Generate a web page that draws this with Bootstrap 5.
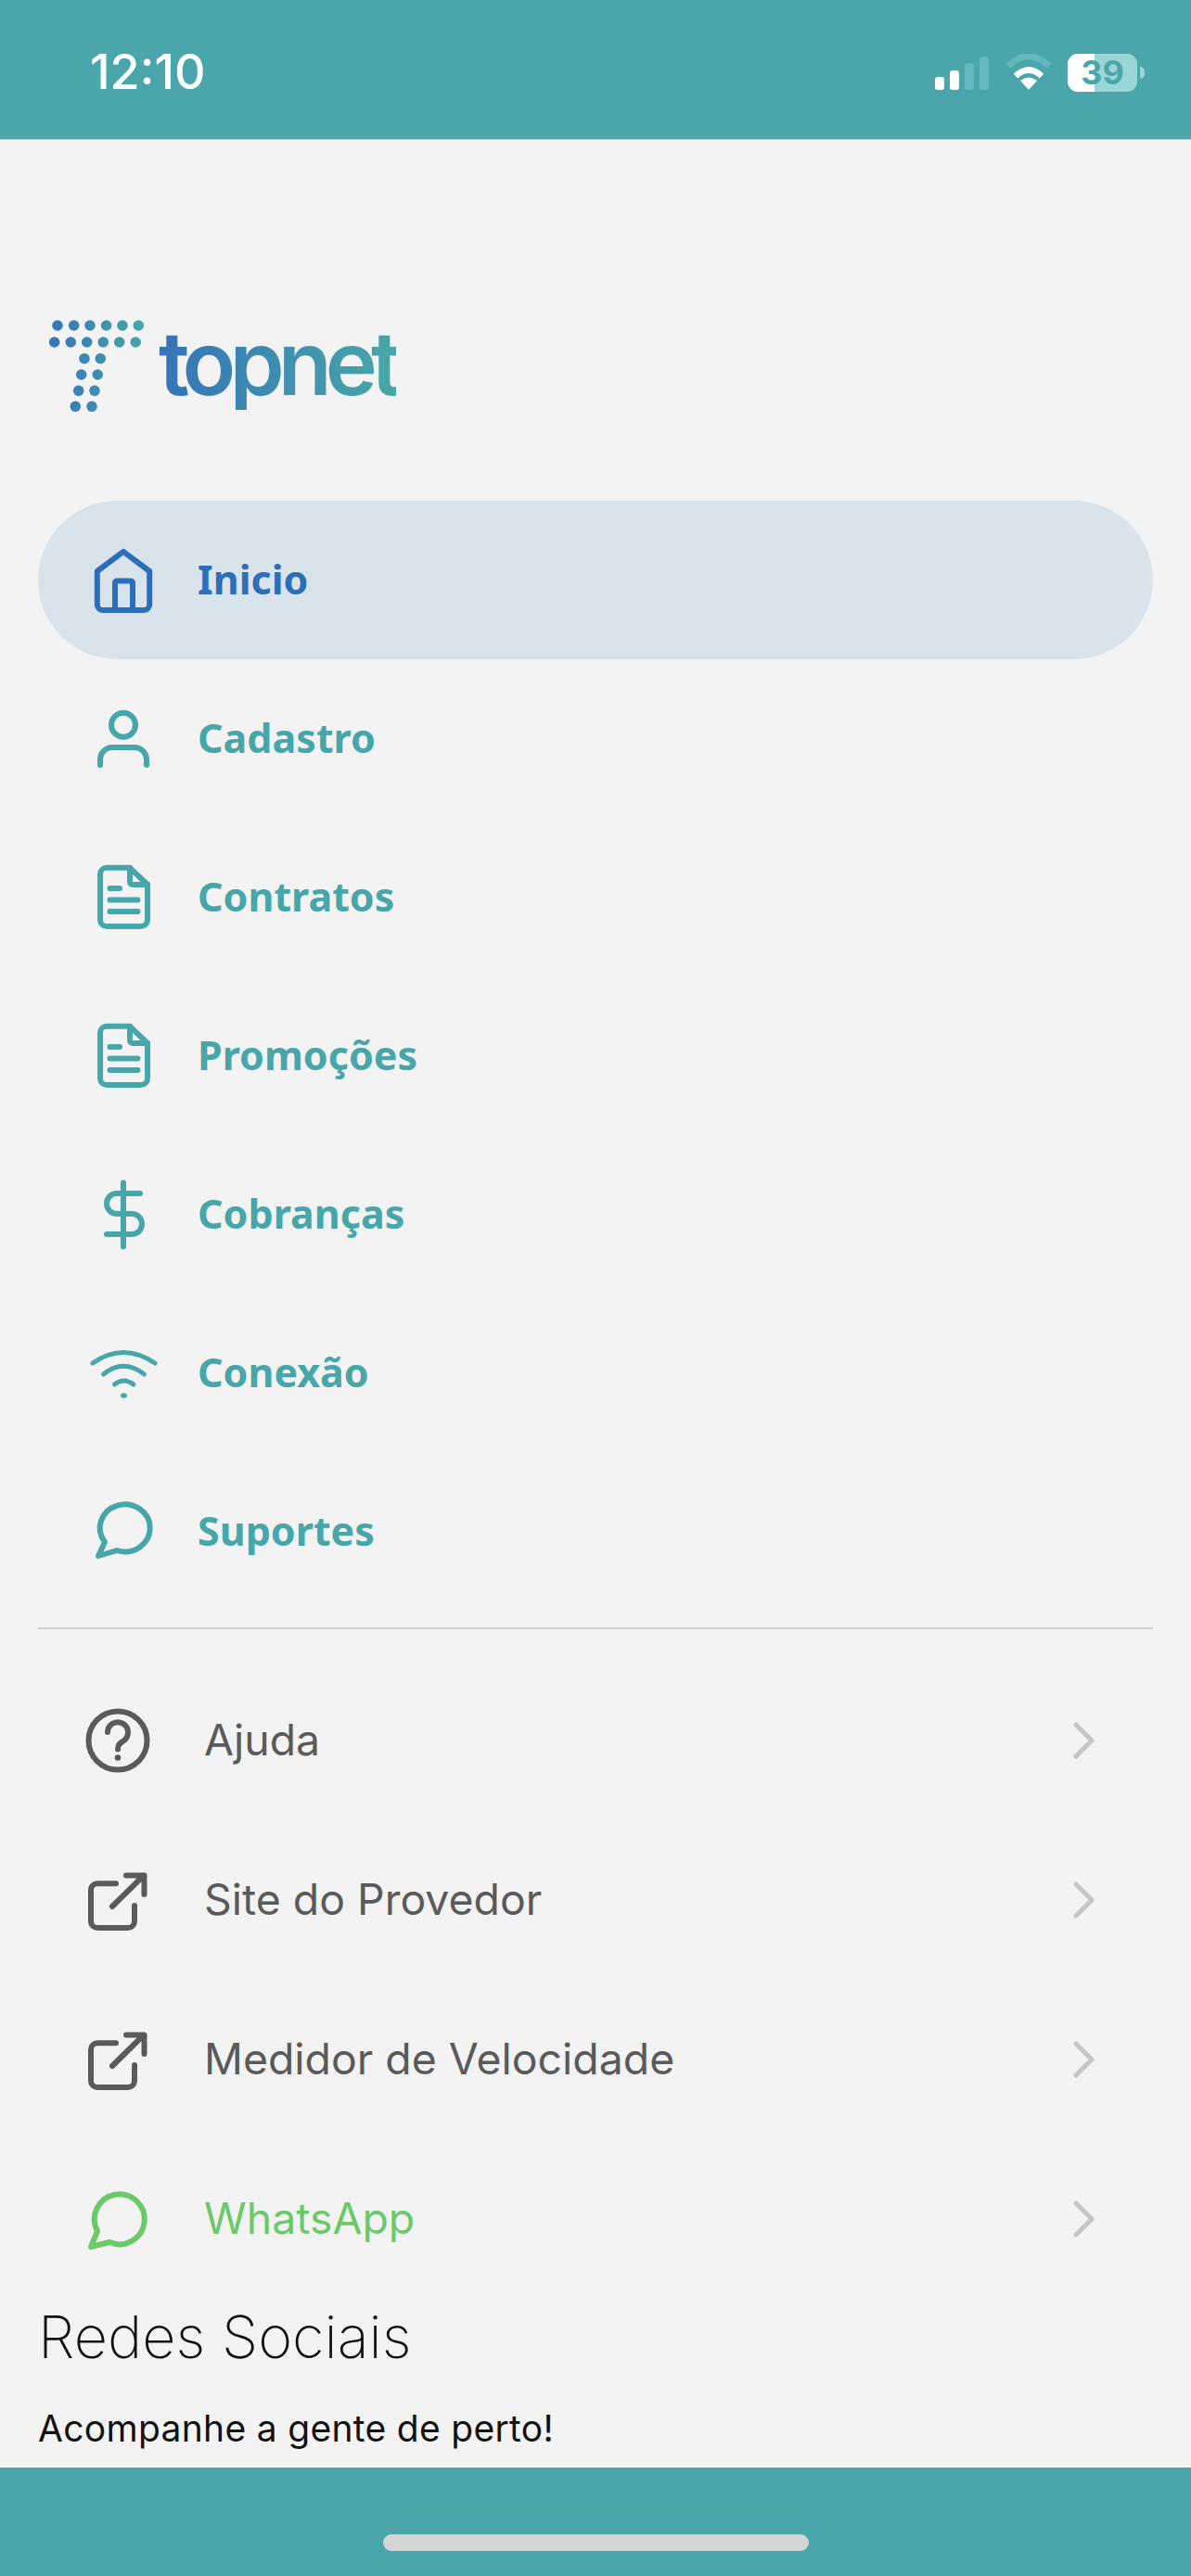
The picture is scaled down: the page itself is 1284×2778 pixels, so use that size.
<!DOCTYPE html>
<html lang="pt-BR">

<head>
    <meta charset="UTF-8">
    <meta name="viewport" content="width=device-width, initial-scale=1.0">
    <title>Topnet</title>
    <link href="https://cdn.jsdelivr.net/npm/bootstrap@5.3.3/dist/css/bootstrap.min.css" rel="stylesheet">
    <style>
        body {
            background-color: #f3f3f3;
            font-family: "Inter", "Liberation Sans", sans-serif;
            height: 2778px;
            overflow: hidden;
        }

        .top-bar {
            height: 151px;
            background-color: #4ba6ac;
            padding: 58px 50px 0 97px;
            border-bottom: 1px solid #b9dcdd;
        }

        .clock {
            color: #fff;
            font-size: 52px;
            font-weight: 500;
            line-height: 40px;
        }

        .sig-bars {
            gap: 6px;
            height: 36px;
            margin-top: 3px;
            margin-right: 2px;
        }

        .sig-bars i {
            width: 10px;
            border-radius: 3px;
            background-color: #63b8bc;
        }

        .sig-bars i.on {
            background-color: #fff;
        }

        .batt {
            width: 75px;
            height: 41px;
            border-radius: 11px;
            color: #4ba6ac;
            font-size: 36px;
            font-weight: 700;
            line-height: 41px;
            text-align: center;
            background: linear-gradient(90deg, #fff 39%, #9ad5d7 39%);
        }

        .batt-tip {
            width: 5px;
            height: 13px;
            margin: 14px 0 0 3px;
            border-radius: 0 5px 5px 0;
            background-color: #9ad5d7;
        }

        .main-area {
            height: 2510px;
            padding: 0 41px;
            overflow: hidden;
        }

        .brand {
            height: 389px;
            padding: 191px 0 0 11px;
        }

        .brand-name {
            font-family: "Inter", sans-serif;
            font-size: 95px;
            font-weight: 600;
            line-height: 100px;
            letter-spacing: -7px;
            margin: 0 0 0 9px;
            background: linear-gradient(90deg, #3574b9, #48a7a7);
            -webkit-background-clip: text;
            background-clip: text;
            color: transparent;
        }

        .menu-link {
            height: 171px;
            padding: 0 0 0 50px;
            gap: 38px;
            color: #47a6a9;
            font-family: "Noto Sans", sans-serif;
            font-size: 43px;
            font-weight: 700;
            border-radius: 86px;
        }

        .menu-link:hover {
            color: #47a6a9;
        }

        .menu-link.active {
            background-color: #d9e3eb;
            color: #2d6eb8;
        }

        .menu-divider {
            margin: 18px 0 34px;
            border-top: 2px solid #cfcfcf;
            opacity: 1;
        }

        .more-row {
            height: 172px;
            padding: 0 62px 0 44px;
            gap: 51px;
            background: transparent;
            border: 0;
            color: #5a5a5a;
            font-size: 46.4px;
            font-weight: 400;
        }

        .more-row.wa {
            color: #6bc96a;
        }

        .social-title {
            font-size: 63px;
            font-weight: 200;
            line-height: 76px;
            color: #111;
            margin: 3px 0 38px;
        }

        .social-sub {
            font-size: 39px;
            line-height: 46px;
            letter-spacing: .3px;
            color: #111;
            margin: 0;
        }

        .bottom-bar {
            height: 117px;
            background-color: #4ba6ac;
            padding-top: 72px;
        }

        .home-pill {
            width: 459px;
            height: 18px;
            border-radius: 9px;
            background-color: #d4d4d4;
        }

        .ico {
            flex: 0 0 84px;
            width: 84px;
            height: 84px;
            fill: none;
            stroke: currentColor;
            stroke-width: 6;
            stroke-linecap: round;
            stroke-linejoin: round;
        }

        .chev {
            width: 26px;
            height: 40px;
            fill: none;
            stroke: #c6c6c6;
            stroke-width: 5;
            stroke-linecap: round;
            stroke-linejoin: round;
        }
    </style>
</head>

<body>

    <div class="top-bar d-flex justify-content-between align-items-start">
        <div class="clock">12:10</div>
        <div class="d-flex align-items-start">
            <div class="sig-bars d-flex align-items-end">
                <i class="on" style="height: 14px"></i>
                <i class="on" style="height: 21px"></i>
                <i style="height: 29px"></i>
                <i style="height: 36px"></i>
            </div>
            <svg width="51" height="40" viewBox="0 0 51 40" class="mx-3">
                <path d="M3 13Q25 -7.4 47 13" fill="none" stroke="#63b8bc" stroke-width="6.5" />
                <path d="M11 24Q25 11 39 24" fill="none" stroke="#fff" stroke-width="6.5" />
                <path d="M25 38.7L16 29Q25 22 34 29Z" fill="#fff" />
            </svg>
            <div class="batt">39</div>
            <div class="batt-tip"></div>
        </div>
    </div>

    <div class="main-area">
        <div class="brand d-flex align-items-start">
            <svg width="110" height="110" viewBox="0 0 110 110">
                <defs>
                    <linearGradient id="dotGrad" gradientUnits="userSpaceOnUse" x1="50" y1="0" x2="155" y2="0">
                        <stop offset="0" stop-color="#3574b9" />
                        <stop offset="1" stop-color="#48a7a7" />
                    </linearGradient>
                </defs>
                <g fill="url(#dotGrad)" transform="translate(-50 -342)">
                    <circle cx="60" cy="351" r="5.8" /><circle cx="77.7" cy="351" r="5.8" /><circle cx="95" cy="351" r="5.8" /><circle cx="112.7" cy="351" r="5.8" /><circle cx="130" cy="351" r="5.8" /><circle cx="147.3" cy="351" r="5.8" />
                    <circle cx="56.7" cy="369" r="5.8" /><circle cx="74.3" cy="369" r="5.8" /><circle cx="91.7" cy="369" r="5.8" /><circle cx="109.3" cy="369" r="5.8" /><circle cx="126.7" cy="369" r="5.8" /><circle cx="144.3" cy="369" r="5.8" />
                    <circle cx="89" cy="386.7" r="5.8" /><circle cx="106.3" cy="386.7" r="5.8" />
                    <circle cx="85.7" cy="404" r="5.8" /><circle cx="103.3" cy="404" r="5.8" />
                    <circle cx="82.7" cy="421.3" r="5.8" /><circle cx="100" cy="421.3" r="5.8" />
                    <circle cx="79.3" cy="438.3" r="5.8" /><circle cx="97" cy="438.3" r="5.8" />
                </g>
            </svg>
            <div class="brand-name">topnet</div>
        </div>

        <!-- main menu -->
        <nav class="nav flex-column">
            <a class="nav-link menu-link active d-flex align-items-center" href="#">
                <svg class="ico" viewBox="0 0 84 84">
                    <path d="M42 10.8L70.2 32V68a6 6 0 0 1-6 6H19.8a6 6 0 0 1-6-6V32Z" />
                    <path d="M33 74V44.5a2 2 0 0 1 2-2H50a2 2 0 0 1 2 2V74" />
                </svg>
                Inicio
            </a>
            <a class="nav-link menu-link d-flex align-items-center" href="#">
                <svg class="ico" viewBox="0 0 84 84">
                    <circle cx="42" cy="26.7" r="13" />
                    <path d="M17 70v-6a13 13 0 0 1 13-13h24a13 13 0 0 1 13 13v6" />
                </svg>
                Cadastro
            </a>
            <a class="nav-link menu-link d-flex align-items-center" href="#">
                <svg class="ico" viewBox="0 0 84 84">
                    <path d="M49 9.8H24a7 7 0 0 0-7 7V66a7 7 0 0 0 7 7H61a7 7 0 0 0 7-7V28Z" />
                    <path d="M49 9.8V25a3 3 0 0 0 3 3H68" />
                    <path d="M27.500 32H38M27.500 44.600H57.500M27.500 57H57.500" />
                </svg>
                Contratos
            </a>
            <a class="nav-link menu-link d-flex align-items-center" href="#">
                <svg class="ico" viewBox="0 0 84 84">
                    <path d="M49 9.8H24a7 7 0 0 0-7 7V66a7 7 0 0 0 7 7H61a7 7 0 0 0 7-7V28Z" />
                    <path d="M49 9.8V25a3 3 0 0 0 3 3H68" />
                    <path d="M27.500 32H38M27.500 44.600H57.500M27.500 57H57.500" />
                </svg>
                Promoções
            </a>
            <a class="nav-link menu-link d-flex align-items-center" href="#">
                <svg class="ico" viewBox="0 0 84 84">
                    <path d="M42 7.500V76.500" />
                    <path d="M60 19H35a11 11 0 0 0 0 22H51a11 11 0 0 1 0 22H24" />
                </svg>
                Cobranças
            </a>
            <a class="nav-link menu-link d-flex align-items-center" href="#">
                <svg class="ico" viewBox="0 0 84 84">
                    <g stroke-width="5">
                        <path d="M9 31Q42 8 76 31" />
                        <path d="M20.500 43Q42 25.600 64.500 43" />
                        <path d="M32.500 54Q42.500 46 53 54" />
                    </g>
                    <ellipse cx="42.500" cy="66" rx="3.500" ry="2.800" fill="currentColor" stroke="none" />
                </svg>
                Conexão
            </a>
            <a class="nav-link menu-link d-flex align-items-center" href="#">
                <svg class="ico" viewBox="0 0 84 84">
                    <path d="M22 53A27 25.500 0 1 1 35 62L15 68Z" />
                </svg>
                Suportes
            </a>
        </nav>

        <hr class="menu-divider">

        <!-- secondary links -->
        <div class="list-group list-group-flush">
            <a href="#" class="list-group-item more-row d-flex align-items-center">
                <svg class="ico" viewBox="0 0 84 84">
                    <circle cx="42" cy="42" r="31.500" />
                    <path d="M31 33a11 11 0 1 1 17 9.500c-4 2.500-6 4-6 9" />
                    <circle cx="42" cy="60.500" r="3.300" fill="currentColor" stroke="none" />
                </svg>
                <span class="flex-grow-1">Ajuda</span>
                <svg class="chev" viewBox="0 0 26 40"><path d="M5 3L22 20L5 37" /></svg>
            </a>
            <a href="#" class="list-group-item more-row d-flex align-items-center">
                <svg class="ico" viewBox="0 0 84 84">
                    <path d="M40 24.200H20a7 7 0 0 0-7 7V65a7 7 0 0 0 7 7H53a7 7 0 0 0 7-7V48" />
                    <path d="M36 49L70 15.500M51 15.500H70.500V36" />
                </svg>
                <span class="flex-grow-1">Site do Provedor</span>
                <svg class="chev" viewBox="0 0 26 40"><path d="M5 3L22 20L5 37" /></svg>
            </a>
            <a href="#" class="list-group-item more-row d-flex align-items-center">
                <svg class="ico" viewBox="0 0 84 84">
                    <path d="M40 24.200H20a7 7 0 0 0-7 7V65a7 7 0 0 0 7 7H53a7 7 0 0 0 7-7V48" />
                    <path d="M36 49L70 15.500M51 15.500H70.500V36" />
                </svg>
                <span class="flex-grow-1">Medidor de Velocidade</span>
                <svg class="chev" viewBox="0 0 26 40"><path d="M5 3L22 20L5 37" /></svg>
            </a>
            <a href="#" class="list-group-item more-row wa d-flex align-items-center">
                <svg class="ico" viewBox="0 0 84 84">
                    <path d="M20 55A27 27 0 1 1 33 67L13 72Z" />
                </svg>
                <span class="flex-grow-1">WhatsApp</span>
                <svg class="chev" viewBox="0 0 26 40"><path d="M5 3L22 20L5 37" /></svg>
            </a>
        </div>

        <h2 class="social-title">Redes Sociais</h2>
        <p class="social-sub">Acompanhe a gente de perto!</p>
    </div>

    <div class="bottom-bar d-flex justify-content-center">
        <div class="home-pill"></div>
    </div>

    <script src="https://cdn.jsdelivr.net/npm/bootstrap@5.3.3/dist/js/bootstrap.bundle.min.js"></script>
</body>

</html>
